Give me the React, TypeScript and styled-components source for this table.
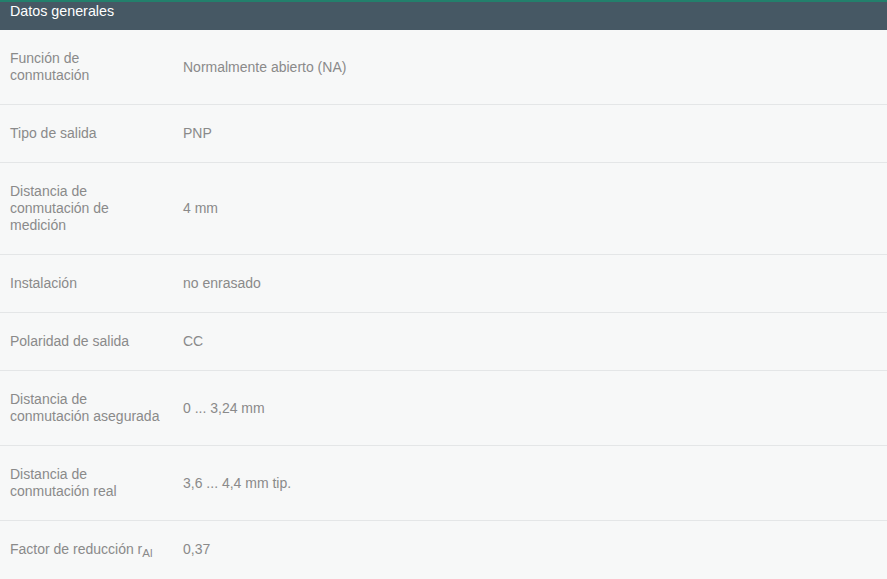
import React from "react";
import styled, { createGlobalStyle } from "styled-components";

const Global = createGlobalStyle`
  html, body { margin: 0; padding: 0; background: #f7f8f8; }
  body { font-family: "Liberation Sans", Arial, sans-serif; }
`;

const Panel = styled.section`
  width: 887px;
  background: #f7f8f8;
`;

const Header = styled.div`
  height: 28px;
  border-top: 2px solid #23806c;
  background: #465864;
  color: #ffffff;
  font-size: 14.3px;
  line-height: 19px;
  padding: 0 10px;
  box-sizing: content-box;
`;

const Row = styled.div`
  display: grid;
  grid-template-columns: 173px 1fr;
  align-items: center;
  padding: 20px 0 20px 10px;
  border-bottom: 1px solid #e4e6e7;
  color: #8a8a8a;
  font-size: 14px;
  line-height: 17px;
  &:last-child { border-bottom: none; }
`;

const Label = styled.div``;
const Value = styled.div``;
const Sub = styled.sub`
  font-size: 11.5px;
  vertical-align: -3px;
  line-height: 0;
`;

const rows: { label: React.ReactNode; value: string }[] = [
  { label: <>Función de<br />conmutación</>, value: "Normalmente abierto (NA)" },
  { label: "Tipo de salida", value: "PNP" },
  { label: <>Distancia de<br />conmutación de<br />medición</>, value: "4 mm" },
  { label: "Instalación", value: "no enrasado" },
  { label: "Polaridad de salida", value: "CC" },
  { label: <>Distancia de<br />conmutación asegurada</>, value: "0 ... 3,24 mm" },
  { label: <>Distancia de<br />conmutación real</>, value: "3,6 ... 4,4 mm tip." },
  { label: <>Factor de reducción r<Sub>Al</Sub></>, value: "0,37" },
];

export default function App() {
  return (
    <>
      <Global />
      <Panel>
        <Header>Datos generales</Header>
        {rows.map((r, i) => (
          <Row key={i}>
            <Label>{r.label}</Label>
            <Value>{r.value}</Value>
          </Row>
        ))}
      </Panel>
    </>
  );
}
